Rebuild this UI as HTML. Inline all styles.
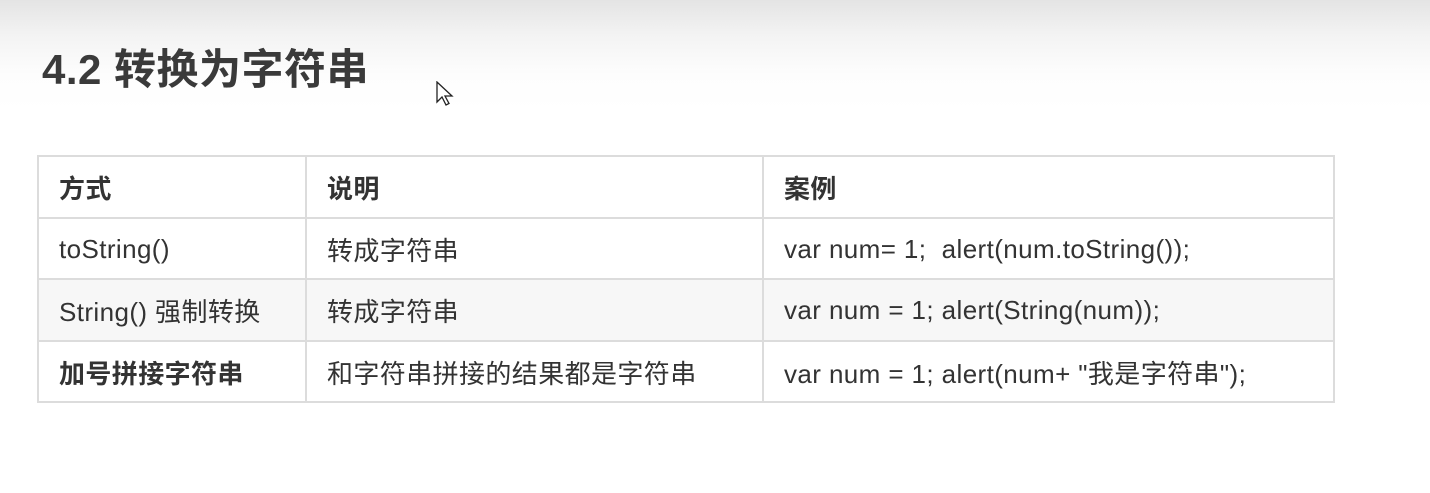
<!DOCTYPE html>
<html><head><meta charset="utf-8"><style>
html,body{margin:0;padding:0;}
body{width:1430px;height:493px;overflow:hidden;position:relative;
background:linear-gradient(#e4e4e4 0px,#f3f3f3 35px,#fdfdfd 75px,#fff 110px);
font-family:"Liberation Sans","Noto Sans CJK SC",sans-serif;color:#333;}
h1{position:absolute;left:42px;top:42px;margin:0;font-size:42px;font-weight:bold;color:#3a3a3a;line-height:56px;letter-spacing:0.5px;}
table{position:absolute;left:37px;top:155px;border-collapse:collapse;font-size:26px;table-layout:fixed;width:1296px;}
td{border:2px solid #dcdcdc;padding:2px 0 0 20px;height:61.5px;box-sizing:border-box;vertical-align:middle;white-space:nowrap;letter-spacing:0.4px;}
tr.h td{font-weight:bold;}
tr.g td{background:#f7f7f7;}
.cur{position:absolute;left:436px;top:81px;}
</style></head><body>
<h1>4.2 转换为字符串</h1>
<svg class="cur" width="18" height="26" viewBox="0 0 18 26"><path d="M1 1 L1 21 L6 16 L10 24 L13 22.5 L9 15 L16 15 Z" fill="#fff" stroke="#222" stroke-width="1.3"/></svg>
<table>
<colgroup><col style="width:268px"><col style="width:457px"><col style="width:571px"></colgroup>
<tr class="h"><td>方式</td><td>说明</td><td>案例</td></tr>
<tr><td>toString()</td><td>转成字符串</td><td>var num= 1;&nbsp; alert(num.toString());</td></tr>
<tr class="g"><td>String() 强制转换</td><td>转成字符串</td><td>var num = 1; alert(String(num));</td></tr>
<tr><td style="font-weight:bold">加号拼接字符串</td><td>和字符串拼接的结果都是字符串</td><td>var num = 1; alert(num+ "我是字符串");</td></tr>
</table>
</body></html>
